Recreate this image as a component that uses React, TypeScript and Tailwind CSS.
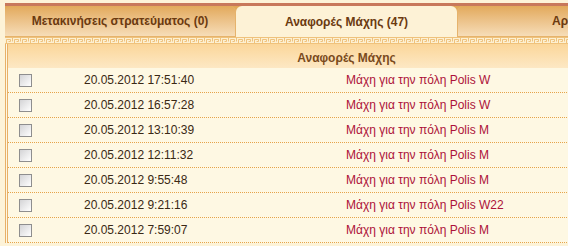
import React from 'react';

type Report = { id: number; date: string; title: string };

const reports: Report[] = [
  { id: 1, date: '20.05.2012 17:51:40', title: 'Μάχη για την πόλη Polis W' },
  { id: 2, date: '20.05.2012 16:57:28', title: 'Μάχη για την πόλη Polis W' },
  { id: 3, date: '20.05.2012 13:10:39', title: 'Μάχη για την πόλη Polis M' },
  { id: 4, date: '20.05.2012 12:11:32', title: 'Μάχη για την πόλη Polis M' },
  { id: 5, date: '20.05.2012 9:55:48', title: 'Μάχη για την πόλη Polis M' },
  { id: 6, date: '20.05.2012 9:21:16', title: 'Μάχη για την πόλη Polis W22' },
  { id: 7, date: '20.05.2012 7:59:07', title: 'Μάχη για την πόλη Polis M' },
];

/** Greek-key band under the tab strip. */
function Meander() {
  return (
    <svg className="block h-[7px] w-full" aria-hidden>
      <defs>
        <pattern id="key" width="8" height="7" patternUnits="userSpaceOnUse">
          <path
            d="M0 0.5H8M0 6.5H8M1.5 6.5V2.5H5.5V4.5H3.5M7.5 0.5V4.5"
            fill="none"
            stroke="#efc27c"
            strokeWidth="1"
          />
        </pattern>
      </defs>
      <rect width="100%" height="7" fill="url(#key)" />
    </svg>
  );
}

function Checkbox() {
  return (
    <span className="block h-[13px] w-[13px] border border-[#8e8e8e] bg-gradient-to-br from-[#d4d4d6] to-[#ffffff]" />
  );
}

export default function App() {
  const tabBase =
    'flex h-[31px] shrink-0 items-center rounded-t-[6px] text-[12px] font-bold text-[#6b3a10]';

  return (
    <div className="h-[246px] w-[568px] overflow-hidden bg-[#fdf3d8] pl-[5px] pt-[3px] font-['Liberation_Sans',Arial,sans-serif]">
      <div className="w-[700px]">
        {/* Top rule */}
        <div className="h-[3px] bg-[#c8785b]" />

        {/* Tabs */}
        <div className="flex bg-gradient-to-b from-[#e0a655] to-[#f6dcb6]">
          <div
            className={`${tabBase} w-[231px] justify-center border-r border-b border-[#e6b36c] bg-gradient-to-b from-[#e2a95a] to-[#f6ddb8]`}
          >
            Μετακινήσεις στρατεύματος (0)
          </div>
          <div className={`${tabBase} w-[221px] justify-center bg-[#fdf2d6]`}>
            Αναφορές Μάχης (47)
          </div>
          <div
            className={`${tabBase} w-[231px] border-l border-b border-[#e6b36c] bg-gradient-to-b from-[#e2a95a] to-[#f6ddb8] pl-[94px]`}
          >
            Αρχείο
          </div>
        </div>

        <div className="bg-[#fdf0d2]">
          <Meander />
        </div>

        {/* Table */}
        <div className="border-l-[3px] border-double border-[#e8b067] bg-[#fef8e3]">
          <div className="flex h-[24px] items-center justify-center bg-gradient-to-b from-[#fbd699] to-[#fde8c4] pr-[20px] pt-[4px] text-[12px] font-bold text-[#7a4a1c]">
            Αναφορές Μάχης
          </div>
          {reports.map((r) => (
            <div
              key={r.id}
              className="flex h-[25px] items-center border-b border-dotted border-[#e6a44a] text-[12px]"
            >
              <div className="w-[76px] pl-[11px]">
                <Checkbox />
              </div>
              <div className="w-[262px] text-[#3a2814]">{r.date}</div>
              <div className="text-[#ad1239]">{r.title}</div>
            </div>
          ))}
        </div>
      </div>
    </div>
  );
}
